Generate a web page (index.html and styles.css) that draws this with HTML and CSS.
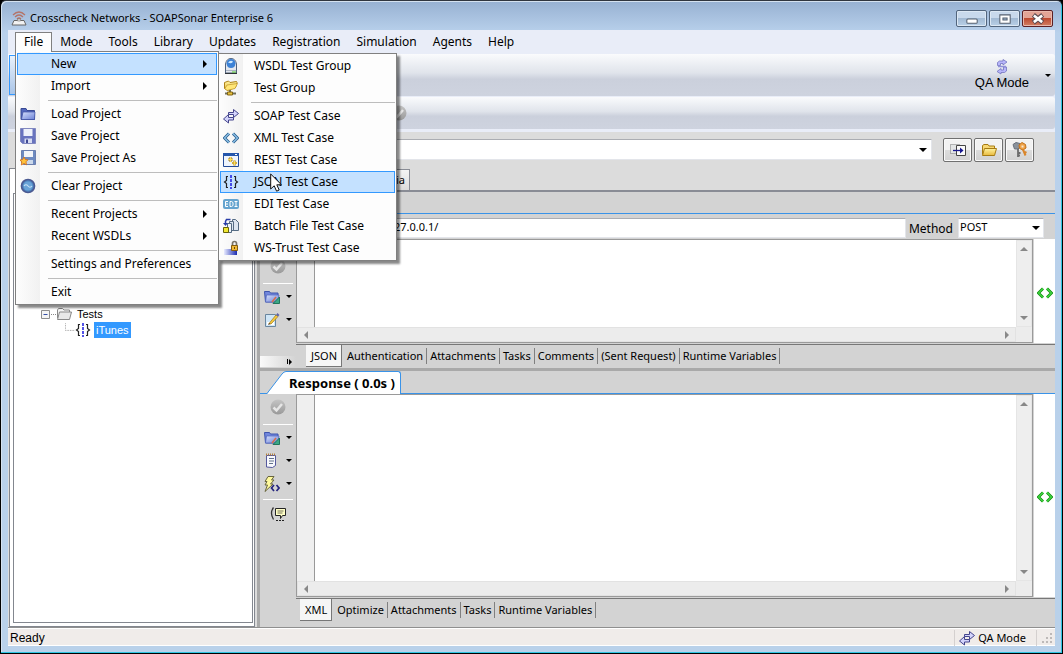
FILE: index.html
```html
<!DOCTYPE html>
<html lang="en">
<head>
<meta charset="utf-8">
<title>Crosscheck Networks - SOAPSonar Enterprise 6</title>
<link rel="stylesheet" href="styles.css">
</head>
<body>
<svg class="defs" aria-hidden="true">
  <defs>
    <linearGradient id="blue" x1="0" y1="0" x2="1" y2="1"><stop offset="0" stop-color="#d6e0fc"/><stop offset="1" stop-color="#6a80d6"/></linearGradient>
    <linearGradient id="gold" x1="0" y1="0" x2="0" y2="1"><stop offset="0" stop-color="#fff3a0"/><stop offset="1" stop-color="#e8b93c"/></linearGradient>
    <linearGradient id="grey" x1="0" y1="0" x2="0" y2="1"><stop offset="0" stop-color="#c4c4c4"/><stop offset="1" stop-color="#999"/></linearGradient>
    <linearGradient id="trust" x1="0" y1="0" x2="1" y2="0"><stop offset="0" stop-color="#e8ebff"/><stop offset="1" stop-color="#1b2bb0"/></linearGradient>
  </defs>
  <symbol id="i-swap" viewBox="0 0 16 16"><path d="M5.500 4.500h5v-3l5 4-5 4v-3h-5z" fill="#d3d4fc" stroke="#45458c"/><path d="M10.500 9.500h-5v-3l-5 4.500 5 4v-3h5z" fill="#d3d4fc" stroke="#45458c"/></symbol>
  <symbol id="i-xml" viewBox="0 0 16 16"><path d="M6 3.500 1.500 8 6 12.500M10 3.500 14.500 8 10 12.500" fill="none" stroke="#2b5f8f" stroke-width="3"/><path d="M6 3.500 1.500 8 6 12.500M10 3.500 14.500 8 10 12.500" fill="none" stroke="#8fc4ea" stroke-width="1.200"/></symbol>
  <symbol id="i-json" viewBox="0 0 16 16"><path d="M5 2.500H3.500v4L1.500 8l2 1.500v4H5M11 2.500h1.500v4l2 1.500-2 1.500v4H11" fill="none" stroke="#222" stroke-width="1.200"/><path d="M8 1v14" stroke="#1a1ae0" stroke-width="1.500" stroke-dasharray="3 1"/></symbol>
  <symbol id="i-check" viewBox="0 0 16 16"><circle cx="8" cy="8" r="7.500" fill="url(#grey)"/><path d="m3.500 8.500 3 3 5.500-6.500" fill="none" stroke="#e6e6e6" stroke-width="2.500"/></symbol>
  <symbol id="i-folder" viewBox="0 0 16 16"><path d="M1 13.500V2.500h5l1 2h7.500v9z" fill="#5368bc" stroke="#394a94"/><path d="M1.500 13.500 3 6h12l-.5 7.500z" fill="url(#blue)" stroke="#3f51a4" stroke-width=".7"/></symbol>
  <symbol id="i-foldermark" viewBox="0 0 16 16"><path d="M.5 2.500h5l1 1.500H14v9H1.500z" fill="#7187dc" stroke="#3e54ad"/><path d="M1.500 13 2.500 6H15l-1 7z" fill="url(#blue)" stroke="#4d62bb" stroke-width=".7"/><path d="M9 14.500 15.500 8v6.500z" fill="#3aa886" stroke="#23745c"/><path d="m8 13 4-5" stroke="#d86f4a" stroke-width="1.500"/></symbol>
  <symbol id="i-disk" viewBox="0 0 16 16"><path d="M.5.5h15v15h-13l-2-2z" fill="#6873be" stroke="#8188bf"/><path d="M3.500 1h9v7h-9z" fill="#eef1fa"/><path d="M4.500 10.500h7.500V15H4.500z" fill="#d7dcf2"/><path d="M6 11.500h2V15H6z" fill="#3f4993"/></symbol>
  <symbol id="i-diskstar" viewBox="0 0 16 16"><path d="M1.500.5h14v14h-12l-2-2z" fill="#6d8ac0" stroke="#6c7fae"/><path d="M4 1h9v6H4z" fill="#f2f4f8"/><path d="M6 10h7v4H6z" fill="#cbd8ea"/><path d="m4 7 1.300 2.500 2.700.3-2 2 .5 3L4 13.500 1.300 15l.5-3-1.800-2 2.700-.5z" fill="#ffc43c" stroke="#d46a18" stroke-width=".8"/></symbol>
  <symbol id="i-clear" viewBox="0 0 16 16"><circle cx="8" cy="8" r="6.500" fill="#4f86c0" stroke="#4b5a92" stroke-width="1.700"/><circle cx="8" cy="8" r="4.500" fill="#6aa4d8"/><path d="M4 8q2-2.500 4 0t4 0" fill="none" stroke="#c8e2f6" stroke-width="1.200"/></symbol>
  <symbol id="i-wsdl" viewBox="0 0 16 16"><path d="M2.500 15V6q1-5.500 5.500-5.500T13.500 6v9z" fill="#e3e7ee" stroke="#52637d"/><path d="M3.500 5.500Q4 1 8 1t4.500 4.500Q12 10 8 10T3.500 5.500z" fill="#3c82d6"/><path d="M5 4.500q2.500-3 5-1-1 3-5 1z" fill="#cfeaff"/><path d="M3 12h10v1H3z" fill="#aab3c2"/><path d="M9 13.500h4v1H9z" fill="#58d12f"/><path d="M2 15.500h12" stroke="#30343a"/></symbol>
  <symbol id="i-group" viewBox="0 0 16 16"><path d="M1.500 8.500v-6l4-1.500 1.500 1.500 6.500-1 .5 1-1.500 5-8 3z" fill="url(#gold)" stroke="#ad8117"/><path d="m2 8.500 2-3.500 10.500-1.500-2.500 5-8 2z" fill="#ffe676" stroke="#bd9426" stroke-width=".7"/><path d="M7 10v3M2 13.500h11" stroke="#6f6f58" stroke-width="2"/><path d="M4.500 12h5v3h-5z" fill="#e8c13d" stroke="#816515"/></symbol>
  <symbol id="i-rest" viewBox="0 0 16 16"><path d="M.5 1.500h15v13H.5z" fill="#eef4fd" stroke="#234a98"/><path d="M0 1h16v3H0z" fill="#2456ac"/><path d="M12 2h2v1h-2z" fill="#fff"/><path d="M7.500 5v5M5 7.500h5M11.500 8.500v5M9 11h5" stroke="#a8832a" stroke-width="2.200"/><path d="M7.500 5v5M5 7.500h5M11.500 8.500v5M9 11h5" stroke="#ffdd55"/></symbol>
  <symbol id="i-edi" viewBox="0 0 16 16"><rect x="0" y="3" width="16" height="10" rx="2" fill="#65a4cf"/><path d="M5 5.500H2.500v5H5M2.500 8H5M7 5.500v5h1.500l1.500-1v-3l-1.500-1zM11.500 5.500h3M13 5.500v5M11.500 10.500h3" stroke="#fff" fill="none"/></symbol>
  <symbol id="i-batch" viewBox="0 0 16 16"><path d="M9.500 1.500h3l3 3v8h-6z" fill="#dce6f1" stroke="#546b83"/><path d="M6.500 3.500h4v9h-4z" fill="#dce6f1" stroke="#546b83"/><path d="M4.500 5.500h4v9h-4z" fill="#eef3f8" stroke="#546b83"/><path d="M7.500 1.500h-4l-1 2V6" fill="none" stroke="#293da9" stroke-width="1.500"/><path d="m0 5 2.500 3L5 5z" fill="#293da9"/><path d="M.5 9.500h5v5h-5z" fill="#f0e833" stroke="#67620c"/></symbol>
  <symbol id="i-trust" viewBox="0 0 16 16"><path d="M1 9h13v6H1z" fill="url(#trust)"/><path d="M9.500 6V3.500q0-2 2-2t2 2V6" fill="none" stroke="#7a7467" stroke-width="1.700"/><path d="M8.500 5.500h6v5h-6z" fill="#f1b935" stroke="#855d0e"/><path d="M11 7h1v2h-1z" fill="#6b470a"/></symbol>
  <symbol id="i-note" viewBox="0 0 16 16"><path d="M2.500 2.500h9v10l-3 2-6-.5z" fill="#f8f9fd" stroke="#54599d"/><path d="M2 1.500h10" stroke="#b3803d" stroke-width="2" stroke-dasharray="1 1"/><path d="M5 5.500h5M5 8h5M5 10.500h4" stroke="#62728b"/></symbol>
  <symbol id="i-edit" viewBox="0 0 16 16"><path d="M1.500 2.500h10v12h-10z" fill="#cfe6f7" stroke="#69869f"/><path d="M3 10h7v3H3z" fill="#fff"/><path d="M5 11.500 12 3l2 1.500L7 12z" fill="#f9cb3d" stroke="#9c7817" stroke-width=".7"/><path d="m12 3 1.500-2L15.500 3 14 4.500z" fill="#5e62a5"/><path d="m5 11-1 2 2.500-1z" fill="#5b3d16"/></symbol>
  <symbol id="i-bolt" viewBox="0 0 16 16"><path d="M4 .5h6L7.500 4H10L6.500 8H9l-8 7.500L3.500 9H1l2-3.500H1z" fill="#fffa9c" stroke="#68653d"/><path d="m10 9-2.500 3 2.500 3M12.500 9l2.500 3-2.500 3" fill="none" stroke="#25257e" stroke-width="1.700"/></symbol>
  <symbol id="i-comment" viewBox="0 0 16 16"><path d="M3.500 1.500q-4 5.500 0 12" fill="none" stroke="#333" stroke-width="1.300"/><path d="M5.500 2.500h10v7h-3l-2 3v-3h-5z" fill="#ffffc6" stroke="#252525"/><path d="M7.500 5h6M7.500 7h5" stroke="#77755a"/><path d="M6 14.500h9" stroke="#222" stroke-dasharray="2 1"/></symbol>
  <symbol id="i-open" viewBox="0 0 16 16"><path d="M1.500 12.500v-9l1.500-1h4l1 1.500h5.500V7" fill="#f8d873" stroke="#a77c13"/><path d="m1.500 13.500 2-7h12l-2 7z" fill="url(#gold)" stroke="#a77c13"/></symbol>
  <symbol id="i-compare" viewBox="0 0 16 16"><path d="M.5 2.500h9v9h-9z" fill="#e3e5e5" stroke="#777" stroke-dasharray="1 1"/><path d="M6.500 3.500h9v10h-9z" fill="#fafafa" stroke="#444"/><path d="M3 8.500h9" stroke="#17178f" stroke-width="1.300"/><path d="m10 5.500 3.500 3-3.500 3z" fill="#17178f"/></symbol>
  <symbol id="i-keys" viewBox="0 0 16 16"><path d="M1 2.500 4 .5l4 1 .5 3L6 7H2.500z" fill="#8a929c" stroke="#6a717b"/><path d="M6 7v8M6 11h2.500M6 13.500h2" stroke="#6c6c6c" stroke-width="1.800"/><path d="m7 3 3-2.500 3.500 2 .5 3.500-3 2-3.500-1.500z" fill="#f0a347" stroke="#bf701c"/><path d="M9.500 3.500h2v2h-2z" fill="#f6e9d8"/><path d="m11 7.500 2.500 6M12 11l2.500-1" stroke="#d9852a" stroke-width="2"/></symbol>
  <symbol id="i-green" viewBox="0 0 16 16"><path d="M6 3.500 1.500 8 6 12.500M10 3.500 14.500 8 10 12.500" fill="none" stroke="#118c11" stroke-width="2.800"/><path d="M6 3.500 1.500 8 6 12.500M10 3.500 14.500 8 10 12.500" fill="none" stroke="#42dc42" stroke-width="1.200"/></symbol>
  <symbol id="i-treefolder" viewBox="0 0 16 16"><path d="M1.500 12V4l1-1.500h4L8 4h5.500v2" fill="#f4f4f4" stroke="#888"/><path d="m1.500 13.500 2-7.500h12l-2 7.500z" fill="#e8e8e8" stroke="#888"/></symbol>
  <symbol id="i-mode" viewBox="0 0 16 16"><path d="M3.500 6.500v-3l2-1.500H9V.5l4 2.500-4 3V4.500H6.500v2z" fill="#b7b6fa" stroke="#7375bf" stroke-width=".8"/><path d="M12.500 8v4l-2 1.500H7V15l-4-2.500 4-3V11h2.500V8z" fill="#b7b6fa" stroke="#7375bf" stroke-width=".8"/><path d="M4 7.500h8" stroke="#9192d8" stroke-width="1.500"/></symbol>
</svg>

<div class="window">
  <header class="titlebar">
    <svg class="icon" viewBox="0 0 16 16"><path d="M2 5q6-6 12 0M4 7q4-4 8 0M6 9q2-2 4 0" fill="none" stroke="#b57468" stroke-width="1.300"/><path d="M3 10.500h10l2 4.500H1z" fill="#f2f2f2" stroke="#666"/><path d="M6.500 9h3v2h-3z" fill="#ddd" stroke="#777" stroke-width=".6"/></svg>
    <h1 class="title">Crosscheck Networks - SOAPSonar Enterprise 6</h1>
    <div class="controls">
      <button class="control" aria-label="Minimize"><svg viewBox="0 0 28 14"><rect x="9.500" y="7.500" width="10" height="4" rx="1" fill="#fff" stroke="#55606f"/></svg></button>
      <button class="control" aria-label="Maximize"><svg viewBox="0 0 28 14"><path d="M9.500 3.500h10v8h-10zM12.500 6.500h4v2h-4z" fill="#fff" fill-rule="evenodd" stroke="#55606f"/></svg></button>
      <button class="control close" aria-label="Close"><svg viewBox="0 0 28 14"><path d="m10 3.500 9 7.500M19 3.500 10 11" stroke="#5b4a50" stroke-width="4.500"/><path d="m10.500 4 8 6.500M18.500 4l-8 6.500" stroke="#fff" stroke-width="2.500"/></svg></button>
    </div>
  </header>

  <div class="client">
    <nav class="menubar">
      <div class="menu-holder">
        <button class="menu-title open">File</button>
        <div class="menu file-menu">
          <div class="item-holder">
            <button class="item selected"><span></span>New<i class="arrow-right"></i></button>
            <div class="menu submenu">
              <button class="item"><svg class="icon"><use href="#i-wsdl"/></svg>WSDL Test Group</button>
              <button class="item"><svg class="icon"><use href="#i-group"/></svg>Test Group</button>
              <hr>
              <button class="item"><svg class="icon"><use href="#i-swap"/></svg>SOAP Test Case</button>
              <button class="item"><svg class="icon"><use href="#i-xml"/></svg>XML Test Case</button>
              <button class="item"><svg class="icon"><use href="#i-rest"/></svg>REST Test Case</button>
              <div class="item-holder">
                <button class="item selected"><svg class="icon"><use href="#i-json"/></svg>JSON Test Case</button>
                <svg class="pointer" viewBox="0 0 12 19"><path d="M.7 1v15l3.500-3.200 2.400 5.400 2.600-1.200-2.400-5.200h4.700z" fill="#fff" stroke="#111"/></svg>
              </div>
              <button class="item"><svg class="icon"><use href="#i-edi"/></svg>EDI Test Case</button>
              <button class="item"><svg class="icon"><use href="#i-batch"/></svg>Batch File Test Case</button>
              <button class="item"><svg class="icon"><use href="#i-trust"/></svg>WS-Trust Test Case</button>
            </div>
          </div>
          <button class="item"><span></span>Import<i class="arrow-right"></i></button>
          <hr>
          <button class="item"><svg class="icon"><use href="#i-folder"/></svg>Load Project</button>
          <button class="item"><svg class="icon"><use href="#i-disk"/></svg>Save Project</button>
          <button class="item"><svg class="icon"><use href="#i-diskstar"/></svg>Save Project As</button>
          <hr>
          <button class="item"><svg class="icon"><use href="#i-clear"/></svg>Clear Project</button>
          <hr>
          <button class="item"><span></span>Recent Projects<i class="arrow-right"></i></button>
          <button class="item"><span></span>Recent WSDLs<i class="arrow-right"></i></button>
          <hr>
          <button class="item"><span></span>Settings and Preferences</button>
          <hr>
          <button class="item"><span></span>Exit</button>
        </div>
      </div>
      <button class="menu-title">Mode</button>
      <button class="menu-title">Tools</button>
      <button class="menu-title">Library</button>
      <button class="menu-title">Updates</button>
      <button class="menu-title">Registration</button>
      <button class="menu-title">Simulation</button>
      <button class="menu-title">Agents</button>
      <button class="menu-title">Help</button>
    </nav>

    <div class="toolbar main-toolbar">
      <button class="tool-pressed" aria-label="Project"></button>
      <button class="mode-button"><svg class="icon"><use href="#i-mode"/></svg>QA Mode</button>
      <i class="arrow-down"></i>
    </div>
    <div class="toolbar run-toolbar"><svg class="icon"><use href="#i-check"/></svg></div>

    <main class="workspace">
      <aside class="project">
        <ul class="tree">
          <li class="branch"><svg class="expander" viewBox="0 0 15 16"><path d="M.5 4.500h8v8h-8z" fill="#f4f4f4" stroke="#8d8d8d"/><path d="M2.500 8.500h4" stroke="#3650a8"/><path d="M10 8.500h5" stroke="#888" stroke-dasharray="1 1"/></svg><svg class="icon"><use href="#i-treefolder"/></svg><span class="node">Tests</span></li>
          <li class="branch leaf"><svg class="elbow" viewBox="0 0 12 16"><path d="M.5 0v8.500H12" fill="none" stroke="#888" stroke-dasharray="1 1"/></svg><svg class="icon"><use href="#i-json"/></svg><span class="node picked">iTunes</span></li>
        </ul>
      </aside>
      <section class="editor-area">
        <div class="address">
          <input class="combo" type="text" aria-label="Address">
          <button class="combo-arrow" aria-label="Show addresses"><i class="arrow-down"></i></button>
          <div class="actions">
            <button class="action" aria-label="Compare"><svg class="icon"><use href="#i-compare"/></svg></button>
            <button class="action" aria-label="Open"><svg class="icon"><use href="#i-open"/></svg></button>
            <button class="action" aria-label="Keys"><svg class="icon"><use href="#i-keys"/></svg></button>
          </div>
        </div>
        <div class="page-tabs"><button class="page-tab">ia</button></div>

        <section class="pane request">
          <div class="request-caption"></div>
          <div class="uri-row">
            <input class="uri" type="text" value="http://127.0.0.1/" aria-label="URI">
            <label class="method-label" for="method">Method</label>
            <div class="select-box"><select id="method"><option>POST</option></select><i class="arrow-down"></i></div>
          </div>
          <div class="pane-body">
            <div class="side-tools">
              <button class="tool single" aria-label="Validate"><svg class="icon"><use href="#i-check"/></svg></button>
              <hr>
              <button class="tool" aria-label="Open file"><svg class="icon"><use href="#i-foldermark"/></svg><i class="arrow-down"></i></button>
              <button class="tool" aria-label="Edit"><svg class="icon"><use href="#i-edit"/></svg><i class="arrow-down"></i></button>
              <div class="overflow"><i class="bar"></i><i class="arrow-right"></i></div>
            </div>
            <div class="stack">
              <div class="edit-row">
                <div class="edit-frame">
                  <div class="gutter"></div><textarea aria-label="Request"></textarea>
                  <div class="vscroll"><i class="tri up"></i><i class="tri down"></i></div>
                  <div class="hscroll"><i class="tri left"></i><i class="tri right"></i></div>
                  <div class="corner"></div>
                </div>
                <div class="format"><svg class="icon"><use href="#i-green"/></svg></div>
              </div>
              <div class="sub-tabs">
                <button class="sub-tab current">JSON</button><button class="sub-tab">Authentication</button><button class="sub-tab">Attachments</button><button class="sub-tab">Tasks</button><button class="sub-tab">Comments</button><button class="sub-tab">(Sent Request)</button><button class="sub-tab">Runtime Variables</button>
              </div>
            </div>
          </div>
        </section>

        <section class="pane response">
          <div class="response-head">
            <svg class="slant" viewBox="0 0 24 23"><path d="M5 23 20 3q2-2.500 4-2.500V23z" fill="#fff"/><path d="M0 22.500h5L20 3q2-2.500 4-2.500" fill="none" stroke="#3a93e8"/></svg>
            <h2 class="response-title">Response ( 0.0s )</h2>
          </div>
          <div class="pane-body">
            <div class="side-tools">
              <button class="tool single" aria-label="Validate response"><svg class="icon"><use href="#i-check"/></svg></button>
              <hr>
              <button class="tool" aria-label="Open response"><svg class="icon"><use href="#i-foldermark"/></svg><i class="arrow-down"></i></button>
              <button class="tool" aria-label="Notes"><svg class="icon"><use href="#i-note"/></svg><i class="arrow-down"></i></button>
              <button class="tool" aria-label="Generate"><svg class="icon"><use href="#i-bolt"/></svg><i class="arrow-down"></i></button>
              <hr class="close-rule">
              <button class="tool single" aria-label="Comment"><svg class="icon"><use href="#i-comment"/></svg></button>
            </div>
            <div class="stack">
              <div class="edit-row">
                <div class="edit-frame">
                  <div class="gutter"></div><textarea aria-label="Response"></textarea>
                  <div class="vscroll"><i class="tri up"></i><i class="tri down"></i></div>
                  <div class="hscroll"><i class="tri left"></i><i class="tri right"></i></div>
                  <div class="corner"></div>
                </div>
                <div class="format"><svg class="icon"><use href="#i-green"/></svg></div>
              </div>
              <div class="sub-tabs">
                <button class="sub-tab current">XML</button><button class="sub-tab">Optimize</button><button class="sub-tab">Attachments</button><button class="sub-tab">Tasks</button><button class="sub-tab">Runtime Variables</button>
              </div>
            </div>
          </div>
        </section>
      </section>
    </main>

    <footer class="status">
      <span>Ready</span>
      <span class="status-mode"><svg class="icon"><use href="#i-swap"/></svg>QA Mode</span>
      <svg class="grip" viewBox="0 0 12 12"><path d="M9 1h2v2H9zM5 5h2v2H5zM9 5h2v2H9zM1 9h2v2H1zM5 9h2v2H5zM9 9h2v2H9z" fill="#bdb9b8"/></svg>
    </footer>
  </div>
</div>
</body>
</html>
```

FILE: styles.css
```css
* { box-sizing: border-box; }

body {
  margin: 0;
  background: #000;
  color: #000;
  font: 12px/16px "Noto Sans", "Open Sans", sans-serif;
}

button, input, select, textarea {
  margin: 0;
  padding: 0;
  border: 0;
  border-radius: 0;
  background: none;
  color: inherit;
  font: inherit;
  outline: 0;
}

.defs { position: absolute; width: 0; height: 0; }
.icon { width: 16px; height: 16px; flex: none; }

.arrow-down, .arrow-right { width: 0; height: 0; flex: none; border: 0 solid transparent; }
.arrow-down { border-width: 3px 3px 0; border-top-color: #000; }
.arrow-right { border-width: 4px 0 4px 4px; border-left-color: #000; }

/* window frame */
.window {
  display: flex;
  flex-direction: column;
  height: 100vh;
  padding: 0 6px 7px;
  border: 1px solid #000;
  border-top-color: #30363f;
  border-radius: 6px 6px 0 0;
  background: linear-gradient(#97b1d2, #b9d1ec 32px, #b9d1ea);
  box-shadow: inset -1px -1px #2fc5e2, inset 1px 1px #d5e2f0;
}
.titlebar { display: flex; align-items: center; height: 29px; padding: 5px 3px 0 4px; flex: none; }
.title { flex: 1; margin: 0 0 0 3px; font-size: 11px; font-weight: 400; }
.controls { display: flex; gap: 2px; }
.control {
  width: 31px;
  height: 17px;
  border: 1px solid #52657d;
  border-radius: 2px;
  background: linear-gradient(#c8d9ec 50%, #a2bad4 50%, #b9d0e7);
  box-shadow: inset 0 0 0 1px #dce8f4;
}
.control svg { display: block; width: 100%; height: 100%; }
.control.close { border-color: #5c1f24; background: linear-gradient(#e3a496 45%, #bd4a31 50%, #d28064); box-shadow: inset 0 0 0 1px #e9b9ad; }

.client { display: flex; flex-direction: column; flex: 1; min-height: 0; margin: 0 1px; background: #e9edf8; }

/* menus */
.menubar { display: flex; align-items: flex-start; height: 24px; padding: 2px 7px 0; flex: none; }
.menu-holder, .item-holder { position: relative; }
.menu-title { display: block; height: 20px; padding: 0 8px; }
.menu-title.open {
  position: relative;
  z-index: 3;
  padding: 0 8px 2px;
  border: 1px solid #808080;
  border-bottom: 0;
  background: #fdfdfd;
}
.menu {
  position: absolute;
  z-index: 2;
  padding: 1px;
  border: 1px solid #808080;
  background: linear-gradient(90deg, #fdfdfd, #f1f1f1 24px, #fdfdfd 24px);
  box-shadow: 3px 3px 2px #0007;
}
.file-menu { top: 19px; left: 0; width: 204px; }
.submenu { top: 0; left: 201px; width: 179px; }
.item {
  display: grid;
  grid-template-columns: 31px 1fr auto;
  align-items: center;
  width: 100%;
  height: 22px;
  padding: 0 9px 0 2px;
  border: 1px solid transparent;
  text-align: left;
}
.item.selected { border-color: #3399ff; background: #c4e1ff; }
.menu hr { height: 1px; margin: 3px 0 2px 31px; border: 0; background: #bdbdbd; }
.pointer { position: absolute; top: 2px; left: 50px; width: 12px; height: 19px; }

/* toolbars */
.toolbar { display: flex; align-items: center; flex: none; border-radius: 0 3px 3px 0; background: linear-gradient(#fafbfd, #e0e4eb 45%, #cbd0dc 60%, #ced3df); }
.main-toolbar { height: 42px; padding-right: 4px; }
.tool-pressed { align-self: stretch; width: 90px; margin: 1px auto 1px 1px; border: 1px solid #3399ff; background: linear-gradient(#e9f1fb, #aac5e8); }
.mode-button { display: flex; flex-direction: column; align-items: center; margin-right: 16px; font: 13px/16px "Liberation Sans", sans-serif; }
.run-toolbar { height: 32px; margin: 1px 0 3px; padding-left: 383px; }

/* workspace */
.workspace { display: grid; grid-template-columns: 249px 1fr; flex: 1; min-height: 0; background: #dcdcdc; }
.project { min-height: 0; margin: 36px 2px 0 1px; padding: 24px 1px 3px 3px; border: 1px solid #83878f; background: #fff; }
.tree { height: 100%; margin: 0; padding: 112px 0 0 27px; border: 1px solid #83878f; background: #fff; list-style: none; font-size: 11px; }
.branch { display: flex; height: 16px; }
.leaf { padding-left: 24px; }
.expander { width: 15px; height: 16px; }
.elbow { width: 10px; height: 16px; }
.node { margin-left: 4px; padding: 0 1px; font-family: "Liberation Sans", sans-serif; }
.picked { margin-left: 3px; padding: 0 2px; background: #3399ff; color: #fff; }

.editor-area { display: flex; flex-direction: column; min-width: 0; min-height: 0; }
.address { display: flex; align-items: center; height: 35px; padding: 0 21px 0 4px; }
.combo, .combo-arrow { height: 21px; border: 1px solid #e3e5ea; border-top-color: #abadb3; background: #fff; }
.combo { flex: 1; min-width: 0; border-right: 0; }
.combo-arrow { display: grid; place-items: center; width: 17px; border-left: 0; }
.combo-arrow .arrow-down, .select-box .arrow-down { border-width: 4px 4px 0; }
.actions { display: flex; gap: 2px; margin-left: 11px; }
.action { display: grid; place-items: center; width: 29px; height: 24px; border: 1px solid #707070; border-radius: 2px; background: linear-gradient(#f2f2f2 50%, #dddddd 50%, #d2d2d2); box-shadow: inset 0 0 0 1px #fafafa; }
.page-tabs { display: flex; align-items: flex-end; height: 25px; padding-left: 57px; border-bottom: 2px solid #898c95; }
.page-tab { width: 96px; height: 21px; padding: 0 4px; border: 1px solid #898c95; border-bottom: 0; background: linear-gradient(#f4f4f4, #dcdcdc); font-size: 11px; text-align: right; }

.pane { display: flex; flex-direction: column; min-height: 0; border-left: 3px solid #a9a9a9; background: #d3d3d3; font-size: 11px; }
.request { flex: 0 0 179px; border-bottom: 3px solid #a9a9a9; }
.response { flex: 1; }
.request-caption { height: 22px; flex: none; border-bottom: 1px solid #3a93e8; }
.uri-row { display: flex; align-items: center; height: 25px; padding: 2px 11px 0 94px; flex: none; }
.uri { flex: 1; min-width: 0; height: 20px; padding: 0 0 2px; border: 1px solid #e3e5ea; border-top-color: #abadb3; background: #fff; }
.method-label { margin: 3px 5px 0 3px; font-size: 12px; }
.select-box { display: flex; align-items: center; width: 86px; height: 20px; padding-right: 3px; border: 1px solid #e3e5ea; border-top-color: #abadb3; background: #fff; }
.select-box select { flex: 1; height: 18px; padding: 0 0 2px 1px; appearance: none; }

.pane-body { display: flex; flex: 1; min-height: 0; }
.side-tools { display: flex; flex-direction: column; width: 36px; padding-top: 5px; flex: none; }
.request .side-tools { padding-top: 19px; }
.side-tools hr { align-self: stretch; height: 1px; margin: 9px 3px 1px; border: 0; background: #fff; }
.side-tools .close-rule { margin: 4px 3px 6px; }
.tool { display: flex; align-items: center; justify-content: space-between; height: 23px; padding: 0 4px; flex: none; }
.tool.single { height: 16px; padding-left: 10px; }
.overflow { display: flex; align-items: center; justify-content: flex-end; height: 11px; margin: auto 0 1px; padding-right: 4px; background: linear-gradient(90deg, #fafafa, #d3d3d3); }
.bar { width: 1px; height: 5px; margin-right: 1px; background: #000; }
.overflow .arrow-right { border-width: 3px 0 3px 3px; }

.stack { display: flex; flex-direction: column; flex: 1; min-width: 0; }
.edit-row { display: flex; flex: 1; min-height: 0; }
.edit-frame { display: grid; grid-template: 1fr 15px / 18px 1fr 16px; flex: 1; min-width: 0; border: 1px solid #9a9a9a; background: #ececec; }
.gutter { border-right: 1px solid #999; background: #efefef; }
.edit-frame textarea { display: block; width: 100%; height: 100%; background: #fff; resize: none; }
.vscroll, .hscroll { display: flex; justify-content: space-between; align-items: center; background: #eee; }
.vscroll { flex-direction: column; padding: 6px 0; border: 1px solid #e5e5e5; }
.hscroll { grid-column: span 2; padding: 0 6px; border: 1px solid #e2e2e2; background: #ececec; }
.tri { width: 0; height: 0; border: 4px solid transparent; }
.up { border-top: 0; border-bottom-color: #888; }
.down { border-bottom: 0; border-top-color: #888; }
.left { border-left: 0; border-right-color: #888; }
.right { border-right: 0; border-left-color: #888; }
.format { display: grid; place-items: center; width: 22px; padding-top: 3px; border-left: 1px solid #d3d3d3; background: #fff; }
.sub-tabs { display: flex; align-items: flex-start; height: 24px; margin-top: 1px; padding-left: 10px; flex: none; border-top: 1px solid #777; }
.sub-tab { position: relative; height: 22px; padding: 0 4px 0 3px; white-space: nowrap; }
.sub-tab::after { content: ""; position: absolute; right: 0; top: 3px; width: 1px; height: 16px; background: #808080; }
.sub-tab.current { padding: 0 4px 0 5px; border: 1px solid #777; border-width: 0 1px 1px 0; background: #f6f6f6; }
.current + .sub-tab { padding-left: 5px; }
.current::after { display: none; }
.response .sub-tabs { height: 29px; padding-left: 4px; }

.response-head { display: flex; height: 23px; padding-left: 2px; flex: none; background: linear-gradient(#3a93e8, #3a93e8) bottom / 100% 1px no-repeat; }
.slant { width: 24px; height: 23px; }
.response-title { height: 23px; margin: 0; padding: 2px 5px 0 3px; border: 1px solid #3a93e8; border-width: 1px 1px 0 0; border-radius: 0 3px 0 0; background: #fff; font-size: 13px; line-height: 18px; }

.status { display: flex; align-items: center; height: 19px; padding: 2px 2px 0; flex: none; border-top: 1px solid #8f8f8f; border-bottom: 1px solid #fff; background: #f0ecea; box-shadow: inset 0 1px #fff; font: 12px/16px "Liberation Sans", sans-serif; }
.status-mode { display: flex; align-items: center; gap: 3px; margin-left: auto; padding: 0 10px 0 4px; border: 1px solid #d4d0cf; border-width: 0 1px; font: 11px/16px "Noto Sans", sans-serif; }
.grip { width: 12px; height: 12px; margin-left: 4px; }
```
